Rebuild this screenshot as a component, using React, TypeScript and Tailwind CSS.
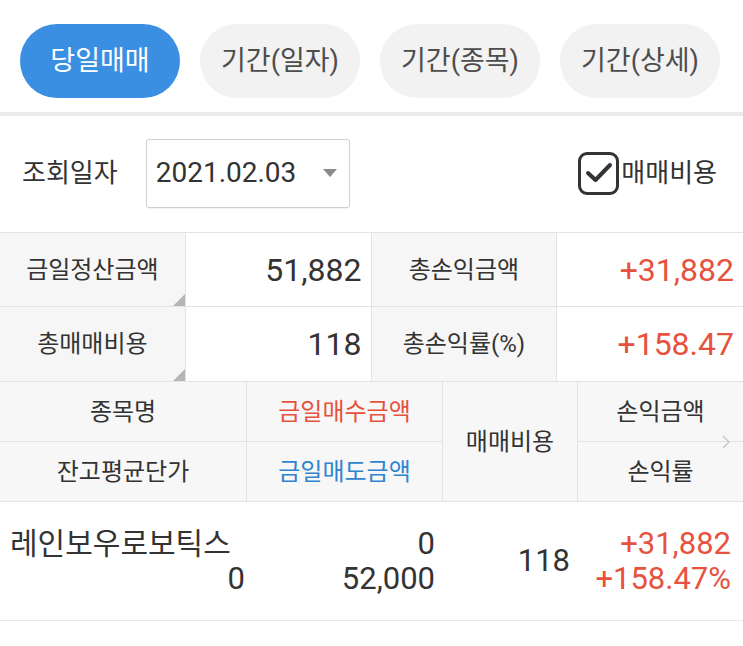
import React from "react";

const FONT = { fontFamily: 'Roboto, "Noto Sans CJK KR", "Noto Sans", sans-serif' };

function Tab({ label, active }: { label: string; active?: boolean }) {
  return (
    <div
      className={
        "w-[160px] h-[74px] rounded-full flex items-center justify-center text-[27px] " +
        (active ? "bg-[#3a8fe3] text-white" : "bg-[#f2f2f2] text-[#4d4d4d]")
      }
    >
      {label}
    </div>
  );
}

function Tri() {
  return (
    <div className="absolute right-0 bottom-0 w-0 h-0 border-l-[12px] border-l-transparent border-b-[12px] border-b-[#b5b5b5]" />
  );
}

export default function App() {
  return (
    <div className="w-[743px] h-[646px] bg-white overflow-hidden text-[#333]" style={FONT}>
      {/* tabs */}
      <div className="flex gap-[20px] px-[20px] pt-[24px]">
        <Tab label="당일매매" active />
        <Tab label="기간(일자)" />
        <Tab label="기간(종목)" />
        <Tab label="기간(상세)" />
      </div>
      <div className="mt-[14px] h-[4px] bg-[#ebebeb]" />

      {/* query row */}
      <div className="flex items-center h-[116px] pl-[22px] pr-[26px] pb-[2px]">
        <span className="text-[26px] text-[#333]">조회일자</span>
        <div className="ml-[28px] w-[204px] h-[69px] border border-[#cfcfcf] rounded-[3px] flex items-center pl-[9px] pr-[12px] shadow-[0_1px_1px_rgba(0,0,0,0.05)]">
          <span className="text-[28px] text-[#333] flex-1">2021.02.03</span>
          <svg width="14" height="8" viewBox="0 0 14 8">
            <path d="M0 0 L14 0 L7 8 Z" fill="#8a8a8a" />
          </svg>
        </div>
        <div className="ml-auto flex items-center">
          <div className="w-[41px] h-[43px] border-[3px] border-[#333] rounded-[9px] flex items-center justify-center">
            <svg width="28" height="22" viewBox="0 0 28 22">
              <path d="M3 11 L10.5 18 L25 3" fill="none" stroke="#333" strokeWidth="4" strokeLinecap="round" strokeLinejoin="round" />
            </svg>
          </div>
          <span className="ml-[2px] text-[26px] text-[#333]">매매비용</span>
        </div>
      </div>

      {/* summary */}
      <div className="border-t border-[#e3e3e3]">
        <div className="grid grid-cols-4 h-[74px] border-b border-[#e3e3e3]">
          <div className="relative bg-[#f6f6f6] border-r border-[#e3e3e3] flex items-center justify-center text-[24px]">
            금일정산금액
            <Tri />
          </div>
          <div className="border-r border-[#e3e3e3] flex items-center justify-end pr-[9px] text-[32px]">51,882</div>
          <div className="bg-[#f6f6f6] border-r border-[#e3e3e3] flex items-center justify-center text-[24px]">총손익금액</div>
          <div className="flex items-center justify-end pr-[9px] text-[32px] text-[#e6523e]">+31,882</div>
        </div>
        <div className="grid grid-cols-4 h-[75px] border-b border-[#e3e3e3]">
          <div className="relative bg-[#f6f6f6] border-r border-[#e3e3e3] flex items-center justify-center text-[24px]">
            총매매비용
            <Tri />
          </div>
          <div className="border-r border-[#e3e3e3] flex items-center justify-end pr-[9px] text-[32px]">118</div>
          <div className="bg-[#f6f6f6] border-r border-[#e3e3e3] flex items-center justify-center text-[24px]">총손익률(%)</div>
          <div className="flex items-center justify-end pr-[9px] text-[32px] text-[#e6523e]">+158.47</div>
        </div>
      </div>

      {/* header */}
      <div className="relative grid grid-cols-[247px_196px_135px_1fr] grid-rows-[60px_59px] bg-[#f7f7f7] border-b border-[#e3e3e3] text-[24px]">
        <div className="border-r border-b border-[#e3e3e3] flex items-center justify-center">종목명</div>
        <div className="border-r border-b border-[#e3e3e3] flex items-center justify-center text-[#e6523e]">금일매수금액</div>
        <div className="row-span-2 border-r border-[#e3e3e3] flex items-center justify-center">매매비용</div>
        <div className="border-b border-[#e3e3e3] flex items-center justify-center">손익금액</div>
        <div className="border-r border-[#e3e3e3] flex items-center justify-center">잔고평균단가</div>
        <div className="border-r border-[#e3e3e3] flex items-center justify-center text-[#2f84d0]">금일매도금액</div>
        <div className="flex items-center justify-center">손익률</div>
        <svg className="absolute right-[13px] top-[53px]" width="8" height="14" viewBox="0 0 8 14">
          <path d="M1 1 L7 7 L1 13" fill="none" stroke="#c8c8c8" strokeWidth="1.5" />
        </svg>
      </div>

      {/* data row */}
      <div className="grid grid-cols-[247px_196px_135px_1fr] h-[119px] border-b border-[#e8e8e8] items-center">
        <div className="flex flex-col pl-[10px] pr-[2px] leading-[35px]">
          <span className="text-[30px] whitespace-nowrap">레인보우로보틱스</span>
          <span className="text-[31px] text-right">0</span>
        </div>
        <div className="flex flex-col items-end pr-[8px] leading-[35px] text-[31px]">
          <span>0</span>
          <span>52,000</span>
        </div>
        <div className="flex items-center justify-end pr-[8px] text-[31px]">118</div>
        <div className="flex flex-col items-end pr-[12px] leading-[35px] text-[31px] text-[#e6523e]">
          <span>+31,882</span>
          <span>+158.47%</span>
        </div>
      </div>
    </div>
  );
}
